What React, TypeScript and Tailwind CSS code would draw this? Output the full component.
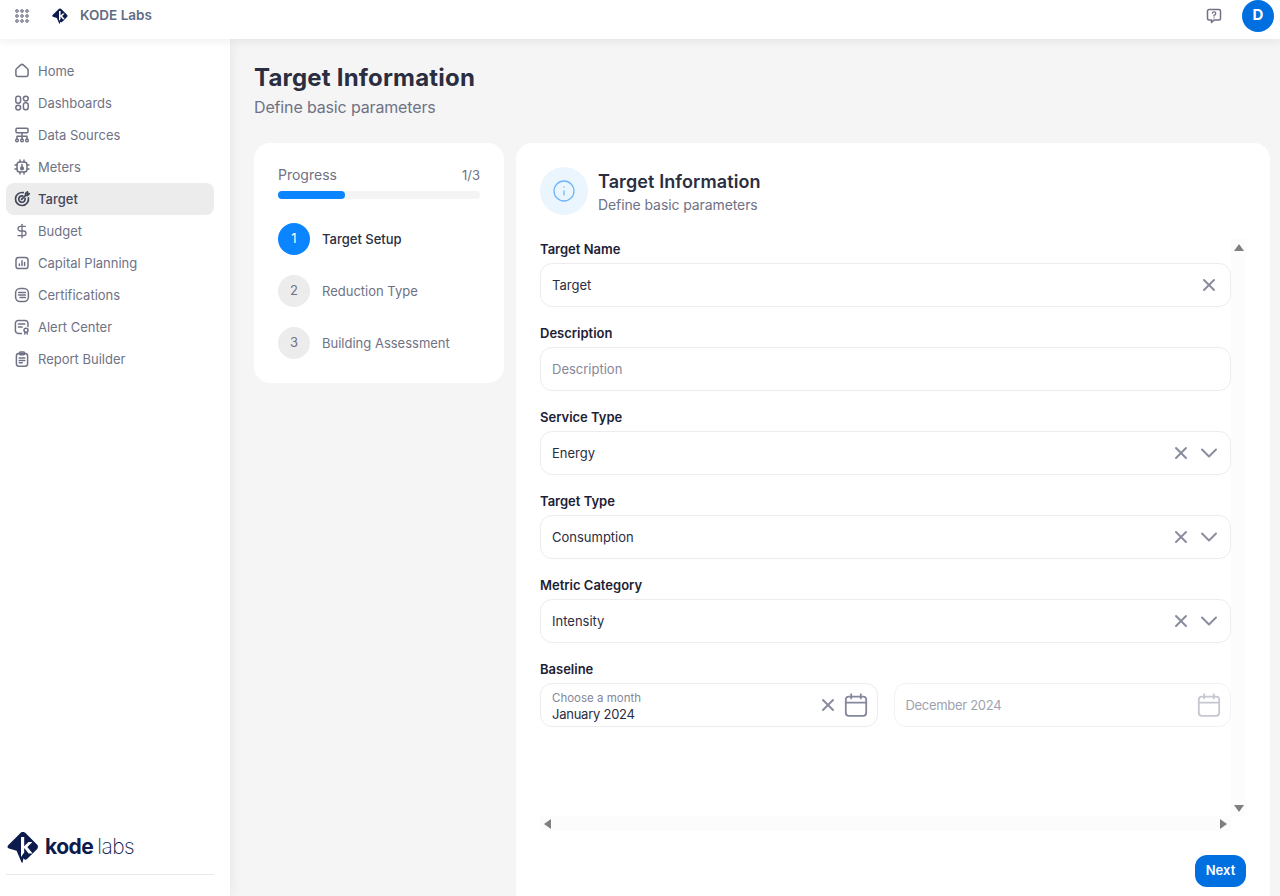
import { ReactNode } from "react";
import { X, ChevronDown, Info, DollarSign } from "lucide-react";

const stroke = {
  fill: "none",
  stroke: "currentColor",
  strokeWidth: 1.5,
  strokeLinecap: "round" as const,
  strokeLinejoin: "round" as const,
};

function Icon({ children }: { children: ReactNode }) {
  return (
    <svg viewBox="0 0 16 16" className="h-4 w-4 shrink-0" {...stroke}>
      {children}
    </svg>
  );
}

const navItems: { label: string; icon: ReactNode; active?: boolean }[] = [
  {
    label: "Home",
    icon: (
      <Icon>
        <path d="M6.800 1.900a1.800 1.800 0 0 1 2.400 0l4.300 3.800c.4.350.6.800.6 1.300v4.600a2 2 0 0 1-2 2H3.900a2 2 0 0 1-2-2V7c0-.5.200-.950.600-1.300Z" />
      </Icon>
    ),
  },
  {
    label: "Dashboards",
    icon: (
      <Icon>
        <rect x="1.800" y="1.200" width="4.800" height="7" rx="2.200" />
        <circle cx="11.800" cy="3.600" r="2.400" />
        <circle cx="4.200" cy="12.600" r="2.400" />
        <rect x="9.400" y="7.800" width="4.800" height="7" rx="2.200" />
      </Icon>
    ),
  },
  {
    label: "Data Sources",
    icon: (
      <Icon>
        <rect x="2" y="1.200" width="12" height="4.600" rx="1" />
        <path d="M8 5.800V12M3 12V9.200h10V12" />
        <circle cx="3" cy="13.400" r="1.300" />
        <circle cx="8" cy="13.400" r="1.300" />
        <circle cx="13" cy="13.400" r="1.300" />
      </Icon>
    ),
  },
  {
    label: "Meters",
    icon: (
      <Icon>
        <rect x="3" y="3" width="10" height="10" rx="2.800" />
        <path d="M6 1v2M10 1v2M6 13v2M10 13v2M1 6h2M1 10h2M13 6h2M13 10h2" />
        <path d="M8 5.400v3" />
        <circle cx="8" cy="9.400" r="1.300" fill="currentColor" />
      </Icon>
    ),
  },
  {
    label: "Target",
    active: true,
    icon: (
      <svg viewBox="0 0 16 16" className="h-4 w-4 shrink-0" {...stroke} strokeWidth={1.700}>
        <path d="M9.200 1.600A6.500 6.500 0 1 0 14.400 6.800" />
        <path d="M8.600 4.900A3.200 3.200 0 1 0 11.100 7.400" />
        <path d="M7.600 8.400 11.600 4.400M11.600 4.400V2.400L13.400 0.800V2.600H15.200L13.600 4.400Z" />
      </svg>
    ),
  },
  {
    label: "Budget",
    icon: <DollarSign className="h-4 w-4 shrink-0" strokeWidth={2} />,
  },
  {
    label: "Capital Planning",
    icon: (
      <Icon>
        <rect x="2" y="2.400" width="12" height="11.200" rx="2.600" />
        <path d="M5.400 10.600V9M8 10.600V5.800M10.600 10.600V7.600" />
      </Icon>
    ),
  },
  {
    label: "Certifications",
    icon: (
      <Icon>
        <rect x="1.600" y="1.600" width="12.800" height="12.800" rx="4.400" />
        <path d="M4.600 5.400h6.800M4.600 8h6.800M6 10.600h5.400" />
      </Icon>
    ),
  },
  {
    label: "Alert Center",
    icon: (
      <Icon>
        <path d="M7.400 14.400H4.400a3 3 0 0 1-3-3V4.400a3 3 0 0 1 3-3h6.600a3 3 0 0 1 3 3v3" />
        <path d="M4.400 5h6.400M4.400 8h3.800" />
        <circle cx="12" cy="11.200" r="2" />
        <path d="M11 13.200 10.800 15M13 13.200 13.200 15" />
      </Icon>
    ),
  },
  {
    label: "Report Builder",
    icon: (
      <Icon>
        <rect x="2.400" y="2.400" width="11.200" height="12.800" rx="2.400" />
        <rect x="5.400" y="0.900" width="5.200" height="2.800" rx="1" />
        <path d="M5.200 7h5.600M5.200 9.400h5.600M5.200 11.800h3" />
      </Icon>
    ),
  },
];

function LogoMark({ className }: { className: string }) {
  return (
    <svg viewBox="0 0 32 32" className={className}>
      <path
        fill="#0d1b4c"
        d="M16 1c1.200 0 2.200.6 3 1.400L30 13.600c1.300 1.300 1.300 3.300 0 4.600L20 28c-1.400 1.300-3 .6-3.400-1L15.400 32c-.4 0-.7-.4-1-1L9.600 19.800 2 17.600c-1.600-.5-2-2.200-.8-3.400L13 2.400C13.800 1.500 14.800 1 16 1Z"
      />
      <path fill="#ffffff" d="M14 6h3.200v9.200L21.400 11h4l-5 5 5.200 6.400h-4L17.200 17v4.600L14 26Z" />
    </svg>
  );
}

function Sidebar() {
  return (
    <aside className="z-10 flex w-[230px] shrink-0 flex-col bg-white pt-[16px] pr-4 pl-[6px] shadow-[0_0_12px_rgba(0,0,0,0.08)]">
      <nav className="flex flex-col">
        {navItems.map((item) => (
          <div
            key={item.label}
            className={`flex h-8 items-center gap-2 rounded-lg px-2 text-[13px] ${
              item.active ? "bg-[#ececec] font-medium text-[#44475a]" : "text-[#6f7285]"
            }`}
          >
            {item.icon}
            <span className="pt-[2px]">{item.label}</span>
          </div>
        ))}
      </nav>
      <div className="mt-auto mb-[21px] border-b border-[#e8e9ec] pb-[11px]">
        <div className="flex items-center gap-[6px] pl-px">
          <LogoMark className="h-8 w-8" />
          <span className="text-[21px] leading-8 tracking-tight text-[#0d1b4c]">
            <span className="font-bold">kode</span>
            <span className="ml-[4px] font-extralight">labs</span>
          </span>
        </div>
      </div>
    </aside>
  );
}

function Field({ label, children }: { label: string; children: ReactNode }) {
  return (
    <div className="flex flex-col">
      <label className="h-5 text-[13px] leading-5 font-semibold text-[#1c2135]">{label}</label>
      {children}
    </div>
  );
}

function ClearableInput({ value, placeholder, select }: { value?: string; placeholder?: string; select?: boolean }) {
  return (
    <div className="mt-[4px] flex h-11 items-center rounded-xl border border-[#ececee] bg-white px-[11px]">
      <span className={`flex-1 pt-[2px] text-[13px] ${value ? "text-[#2a2e40]" : "text-[#85879a]"}`}>
        {value ?? placeholder}
      </span>
      {value && <X className="h-5 w-5 text-[#8a8c9e]" strokeWidth={2.400} />}
      {select && <ChevronDown className="-mr-[4px] ml-1 h-7 w-7 text-[#8a8c9e]" strokeWidth={1.700} />}
    </div>
  );
}

function Calendar({ className }: { className: string }) {
  return (
    <svg viewBox="0 0 20 20" className={className} {...stroke}>
      <rect x="1.500" y="3" width="17" height="16" rx="2.500" />
      <path d="M1.500 8h17M6 1v3.500M14 1v3.500" />
    </svg>
  );
}

function ScrollArrow({ dir }: { dir: "up" | "down" | "left" | "right" }) {
  const d = {
    up: "M5 1 10 8H0Z",
    down: "M0 2H10L5 9Z",
    left: "M8 0V10L1 5Z",
    right: "M2 0V10L9 5Z",
  }[dir];
  return (
    <svg viewBox="0 0 10 10" className="h-[10px] w-[10px] text-[#7f7f7f]">
      <path d={d} fill="currentColor" />
    </svg>
  );
}

function FormPanel() {
  return (
    <section className="flex h-[800px] flex-1 flex-col rounded-t-2xl bg-white px-6 pt-6">
      <div className="flex items-start gap-[10px]">
        <div className="flex h-12 w-12 items-center justify-center rounded-full bg-[#ebf5fe]">
          <Info className="h-6 w-6 text-[#6eb6f7]" strokeWidth={1.300} />
        </div>
        <div className="pt-[3px]">
          <h2 className="text-[18px] leading-6 font-semibold tracking-[0.1px] text-[#2a2e40]">Target Information</h2>
          <p className="mt-[1px] text-[14px] leading-5 tracking-[-0.1px] text-[#6f7285]">Define basic parameters</p>
        </div>
      </div>

      <div className="mt-6 flex h-[592px] flex-col">
        <div className="flex min-h-0 flex-1">
          <div className="flex flex-1 flex-col gap-4">
            <Field label="Target Name">
              <ClearableInput value="Target" />
            </Field>
            <Field label="Description">
              <ClearableInput placeholder="Description" />
            </Field>
            <Field label="Service Type">
              <ClearableInput value="Energy" select />
            </Field>
            <Field label="Target Type">
              <ClearableInput value="Consumption" select />
            </Field>
            <Field label="Metric Category">
              <ClearableInput value="Intensity" select />
            </Field>
            <Field label="Baseline">
              <div className="mt-[4px] flex gap-4">
                <div className="flex h-11 flex-1 items-center rounded-xl border border-[#ececee] px-[11px]">
                  <div className="flex-1 pt-[3px]">
                    <div className="text-[11.500px] leading-[14px] text-[#85879a]">Choose a month</div>
                    <div className="text-[13px] leading-[18px] tracking-[-0.25px] text-[#2a2e40]">January 2024</div>
                  </div>
                  <X className="h-5 w-5 text-[#8a8c9e]" strokeWidth={2.400} />
                  <Calendar className="-mr-[2px] ml-[6px] h-6 w-6 text-[#85879a]" />
                </div>
                <div className="flex h-11 flex-1 items-center rounded-xl border border-[#f2f2f4] px-[11px]">
                  <span className="flex-1 pt-[2px] text-[13px] tracking-[-0.3px] text-[#a0a2b0]">December 2024</span>
                  <Calendar className="-mr-[2px] h-6 w-6 text-[#c6c7d0]" />
                </div>
              </div>
            </Field>
          </div>
          <div className="flex w-[15px] flex-col items-center justify-between bg-[#fcfcfc] pt-[4px] pb-[3px]">
            <ScrollArrow dir="up" />
            <ScrollArrow dir="down" />
          </div>
        </div>
        <div className="flex h-[15px] w-[691px] items-center justify-between bg-[#fcfcfc] px-[3px]">
          <ScrollArrow dir="left" />
          <ScrollArrow dir="right" />
        </div>
      </div>

      <div className="mt-6 flex justify-end">
        <button className="h-8 w-[51px] rounded-xl bg-[#0070e0] text-[13px] font-semibold text-white">Next</button>
      </div>
    </section>
  );
}

function ProgressPanel() {
  const steps = ["Target Setup", "Reduction Type", "Building Assessment"];
  return (
    <section className="h-[240px] w-[250px] shrink-0 self-start rounded-2xl bg-white p-6">
      <div className="flex items-center justify-between text-[13px] leading-4 text-[#6f7285]">
        <span className="text-[14px]">Progress</span>
        <span>1/3</span>
      </div>
      <div className="mt-2 h-2 rounded-full bg-[#f4f4f5]">
        <div className="h-2 w-[67px] rounded-full bg-[#0a84ff]" />
      </div>
      <div className="mt-6 flex flex-col gap-5">
        {steps.map((step, i) => (
          <div key={step} className="flex items-center gap-3">
            <div
              className={`flex h-8 w-8 items-center justify-center rounded-full text-[13px] ${
                i === 0 ? "bg-[#0a84ff] text-white" : "bg-[#ececec] text-[#6f7285]"
              }`}
            >
              {i + 1}
            </div>
            <span className={`pt-[2px] text-[13px] ${i === 0 ? "font-medium text-[#2a2e40]" : "text-[#6f7285]"}`}>
              {step}
            </span>
          </div>
        ))}
      </div>
    </section>
  );
}

export default function App() {
  return (
    <div className="flex h-[896px] flex-col overflow-hidden bg-[#f5f5f5] font-['Inter',sans-serif]">
      <header className="z-20 flex h-[39px] shrink-0 items-center bg-white pr-[6px] pb-2 pl-[15px] shadow-[0_2px_10px_rgba(0,0,0,0.07)]">
        <svg viewBox="0 0 14 14" className="h-[14px] w-[14px] text-[#77798c]">
          {[2, 7, 12].map((y) =>
            [2, 7, 12].map((x) => (
              <circle key={`${x}-${y}`} cx={x} cy={y} r="1.400" fill="#a9aab6" stroke="currentColor" strokeWidth={0.9} />
            )),
          )}
        </svg>
        <LogoMark className="ml-[23px] h-4 w-4" />
        <span className="ml-[12px] text-[13.500px] font-semibold text-[#5f6c85]">KODE Labs</span>
        <svg viewBox="0 0 16 16" className="mr-5 ml-auto h-[16px] w-[16px] text-[#6f7285]" {...stroke}>
          <path d="M3 1.500h10A1.500 1.500 0 0 1 14.500 3v7.500A1.500 1.500 0 0 1 13 12H8l-2.500 2.500V12H3A1.500 1.500 0 0 1 1.500 10.500V3A1.500 1.500 0 0 1 3 1.500Z" />
          <path d="M6.400 5.200A1.700 1.700 0 1 1 8 7.200V8M8 9.800v.1" strokeWidth={1.300} />
        </svg>
        <div className="flex h-8 w-8 items-center justify-center rounded-full bg-[#0070e0] text-[15px] font-bold text-white">
          D
        </div>
      </header>

      <div className="flex min-h-0 flex-1">
        <Sidebar />
        <main className="flex min-w-0 flex-1 flex-col pt-6 pr-[10px] pl-6">
          <h1 className="text-[24px] leading-[30px] font-bold tracking-[0.2px] text-[#2a2e40]">Target Information</h1>
          <p className="mt-[2px] text-[16px] leading-6 tracking-[-0.15px] text-[#6f7285]">Define basic parameters</p>
          <div className="mt-6 flex gap-3">
            <ProgressPanel />
            <FormPanel />
          </div>
        </main>
      </div>
    </div>
  );
}
